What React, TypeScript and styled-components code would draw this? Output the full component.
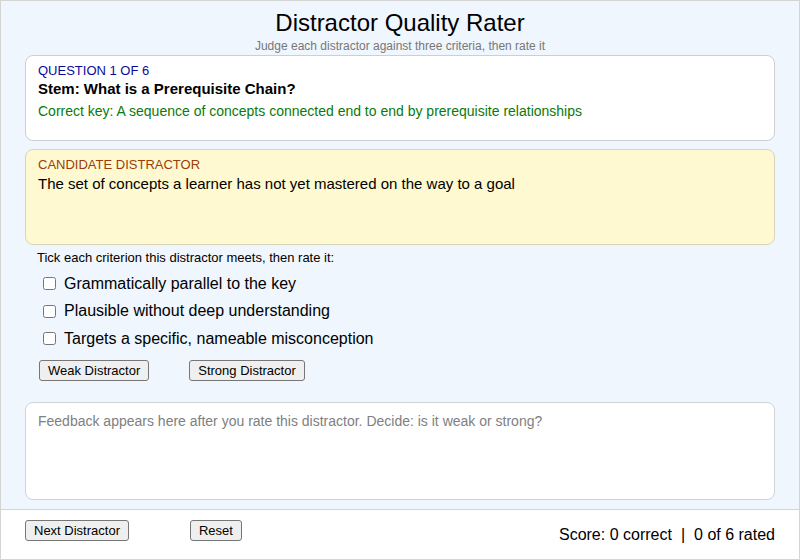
import React, {useState} from 'react';
import styled, {createGlobalStyle} from 'styled-components';

const GlobalStyle = createGlobalStyle`
  html, body {
    margin: 0;
    padding: 0;
    background: #ffffff;
  }
  body {
    font-family: "Liberation Sans", Arial, sans-serif;
  }
`;

const Frame = styled.div`
  width: 800px;
  height: 560px;
  box-sizing: border-box;
  border: 1px solid #d4d4d4;
  display: flex;
  flex-direction: column;
  overflow: hidden;
`;

const Main = styled.main`
  height: 509px;
  box-sizing: border-box;
  background: #eff6fe;
  border-bottom: 1px solid #cfd4da;
  padding: 8px 24px 0;
  display: flex;
  flex-direction: column;
`;

const Title = styled.h1`
  margin: 0;
  font-size: 24px;
  line-height: 28px;
  font-weight: normal;
  text-align: center;
  color: #000;
`;

const Subtitle = styled.div`
  font-size: 12px;
  line-height: 16px;
  text-align: center;
  color: #777;
  margin-top: 1px;
`;

const Card = styled.section<{$tone?: 'white' | 'yellow'; $height: number; $top: number}>`
  box-sizing: border-box;
  height: ${p => p.$height}px;
  margin-top: ${p => p.$top}px;
  background: ${p => (p.$tone === 'yellow' ? '#fff9d1' : '#ffffff')};
  border: 1px solid ${p => (p.$tone === 'yellow' ? '#d9d4b8' : '#cfcfcf')};
  border-radius: 8px;
  padding: 7px 12px;
`;

const Tag = styled.div<{$color: string}>`
  font-size: 13px;
  line-height: 16px;
  color: ${p => p.$color};
`;

const Stem = styled.div`
  font-size: 15px;
  line-height: 18px;
  font-weight: bold;
  margin-top: 1px;
`;

const KeyLine = styled.div`
  font-size: 14px;
  line-height: 18px;
  color: #0a7a0a;
  margin-top: 4px;
`;

const DistractorText = styled.div`
  font-size: 15px;
  line-height: 18px;
  margin-top: 2px;
  color: #000;
`;

const Prompt = styled.div`
  font-size: 13px;
  line-height: 16px;
  margin: 5px 0 0 12px;
`;

const CriteriaList = styled.div`
  display: flex;
  flex-direction: column;
  margin: 4px 0 0 18px;
`;

const Criterion = styled.label`
  display: flex;
  align-items: center;
  height: 27.5px;
  font-size: 16px;
  color: #000;
  cursor: pointer;
  input {
    width: 13px;
    height: 13px;
    margin: 0 8px 0 0;
  }
`;

const ButtonRow = styled.div<{$gap: number}>`
  display: flex;
  gap: ${p => p.$gap}px;
  align-items: center;
`;

const Btn = styled.button`
  box-sizing: border-box;
  height: 21px;
  padding: 0 8px;
  font-family: "Liberation Sans", Arial, sans-serif;
  font-size: 13px;
  color: #000;
  background: #efefef;
  border: 1px solid #767676;
  border-radius: 3px;
  cursor: pointer;
`;

const RateRow = styled(ButtonRow)`
  margin: 7px 0 0 14px;
`;

const Feedback = styled.div`
  box-sizing: border-box;
  height: 98px;
  margin-top: 21px;
  background: #fff;
  border: 1px solid #cfd4da;
  border-radius: 8px;
  padding: 9px 12px;
  font-size: 14px;
  line-height: 18px;
  color: #808080;
`;

const Footer = styled.footer`
  flex: 1;
  background: #fff;
  display: flex;
  justify-content: space-between;
  align-items: flex-start;
  padding: 10px 24px 0;
`;

const Score = styled.div`
  font-size: 16px;
  line-height: 20px;
  margin-top: 5px;
  color: #000;
  span {
    margin: 0 9px;
  }
`;

const criteria = [
  'Grammatically parallel to the key',
  'Plausible without deep understanding',
  'Targets a specific, nameable misconception'
];

const App = () => {
  const [checked, setChecked] = useState<boolean[]>([false, false, false]);

  function toggle(i: number): void {
    setChecked(checked.map((c, j) => (j === i ? !c : c)));
  }

  return (
    <>
      <GlobalStyle />
      <Frame>
        <Main>
          <Title>Distractor Quality Rater</Title>
          <Subtitle>Judge each distractor against three criteria, then rate it</Subtitle>
          <Card $height={86} $top={1}>
            <Tag $color="#0a0a9a">QUESTION 1 OF 6</Tag>
            <Stem>Stem: What is a Prerequisite Chain?</Stem>
            <KeyLine>Correct key: A sequence of concepts connected end to end by prerequisite relationships</KeyLine>
          </Card>
          <Card $tone="yellow" $height={96} $top={8}>
            <Tag $color="#9a3d0a">CANDIDATE DISTRACTOR</Tag>
            <DistractorText>The set of concepts a learner has not yet mastered on the way to a goal</DistractorText>
          </Card>
          <Prompt>Tick each criterion this distractor meets, then rate it:</Prompt>
          <CriteriaList>
            {criteria.map((c, i) => (
              <Criterion key={c}>
                <input type="checkbox" checked={checked[i]} onChange={() => toggle(i)} />
                {c}
              </Criterion>
            ))}
          </CriteriaList>
          <RateRow $gap={40}>
            <Btn>Weak Distractor</Btn>
            <Btn>Strong Distractor</Btn>
          </RateRow>
          <Feedback>Feedback appears here after you rate this distractor. Decide: is it weak or strong?</Feedback>
        </Main>
        <Footer>
          <ButtonRow $gap={61}>
            <Btn>Next Distractor</Btn>
            <Btn>Reset</Btn>
          </ButtonRow>
          <Score>Score: 0 correct<span>|</span>0 of 6 rated</Score>
        </Footer>
      </Frame>
    </>
  );
};

export default App;
